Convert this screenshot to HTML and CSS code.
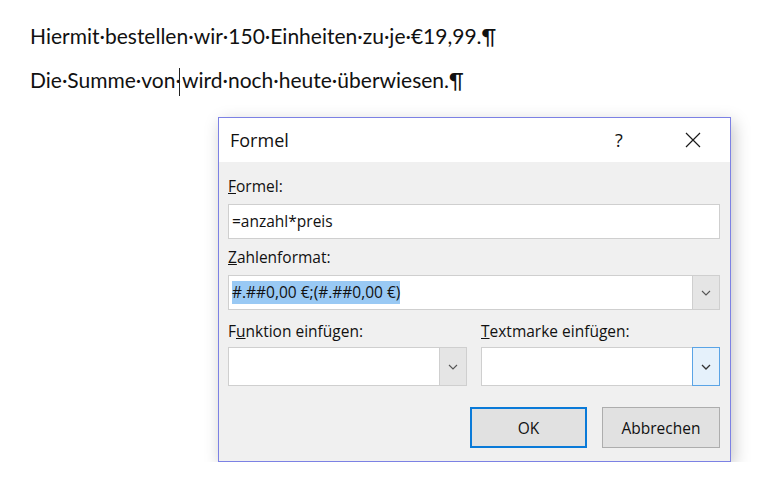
FILE: index.html
```html
<!DOCTYPE html>
<html lang="de">
<head>
    <meta charset="UTF-8">
    <meta name="viewport" content="width=device-width, initial-scale=1.0">
    <title>Formel</title>
    <link rel="stylesheet" href="styles.css">
</head>
<body>
    <div class="doc">
        <p>Hiermit·bestellen·wir·150·Einheiten·zu·je·€19,99.¶</p>
        <p>Die·Summe·von·<span class="caret"></span>wird·noch·heute·überwiesen.¶</p>
    </div>

    <div class="dialog">
        <div class="titlebar">
            <span class="title">Formel</span>
            <span class="help">?</span>
            <span class="close">
                <svg width="16" height="16" viewBox="0 0 16 16">
                    <path d="M1 1 L15 15 M15 1 L1 15" stroke="#1a1a1a" stroke-width="1.2" fill="none"/>
                </svg>
            </span>
        </div>
        <div class="content">
            <label class="lbl"><u>F</u>ormel:</label>
            <div class="field">=anzahl*preis</div>

            <label class="lbl"><u>Z</u>ahlenformat:</label>
            <div class="field combo">
                <span class="value"><span class="sel">#.##0,00 €;(#.##0,00 €)</span></span>
                <span class="drop">
                    <svg width="10" height="6" viewBox="0 0 10 6"><path d="M1 1 L5 5 L9 1" stroke="#555" stroke-width="1.1" fill="none"/></svg>
                </span>
            </div>

            <div class="cols">
                <div>
                    <label class="lbl short">F<u>u</u>nktion einfügen:</label>
                    <div class="field combo tall">
                        <span class="value"></span>
                        <span class="drop">
                            <svg width="10" height="6" viewBox="0 0 10 6"><path d="M1 1 L5 5 L9 1" stroke="#555" stroke-width="1.1" fill="none"/></svg>
                        </span>
                    </div>
                </div>
                <div>
                    <label class="lbl short"><u>T</u>extmarke einfügen:</label>
                    <div class="field combo tall">
                        <span class="value"></span>
                        <span class="drop hot">
                            <svg width="10" height="6" viewBox="0 0 10 6"><path d="M1 1 L5 5 L9 1" stroke="#333" stroke-width="1.3" fill="none"/></svg>
                        </span>
                    </div>
                </div>
            </div>

            <div class="buttons">
                <button class="btn default">OK</button>
                <button class="btn">Abbrechen</button>
            </div>
        </div>
    </div>
</body>
</html>
```

FILE: styles.css
```css
* {
    padding: 0;
    margin: 0;
    box-sizing: border-box;
}
body {
    background: #fff;
    color: #111;
}
.doc {
    padding: 14px 0 0 30px;
    font-family: Lato, "Open Sans", sans-serif;
    font-size: 21px;
}
.doc p {
    line-height: 44px;
    white-space: nowrap;
}
.caret {
    display: inline-block;
    width: 1px;
    height: 28px;
    background: #222;
    vertical-align: -8px;
    margin-left: -2px;
    margin-right: 2px;
}

.dialog {
    margin: 15px 0 0 218px;
    width: 513px;
    border: 1px solid #7c81e4;
    background: #f0f0f0;
    box-shadow: 3px 5px 16px rgba(0, 0, 0, 0.22);
    font-family: "Open Sans", "Noto Sans", sans-serif;
    color: #111;
}
.titlebar {
    height: 44px;
    background: #fff;
    display: flex;
    align-items: center;
    padding-left: 11px;
}
.title {
    font-size: 18px;
    flex: 1;
}
.help {
    font-size: 18px;
    width: 20px;
    margin-right: 50px;
}
.close {
    width: 45px;
    display: flex;
    align-items: center;
}
.close svg {
    display: block;
}

.content {
    padding: 13px 10px 13px 9px;
}
.lbl {
    display: block;
    height: 22px;
    line-height: 22px;
    font-size: 15.5px;
    margin: 7px 0;
}
.content > .lbl:first-child {
    margin-top: 0;
}
.lbl.short {
    margin: 10px 0 5px;
}
.field {
    height: 35px;
    background: #fff;
    border: 1px solid #cfcfcf;
    font-size: 15.5px;
    line-height: 33px;
    padding-left: 3px;
}
.combo {
    display: flex;
    padding-left: 3px;
}
.combo .value {
    flex: 1;
    display: flex;
    align-items: center;
}
.sel {
    background: #99c9f4;
    line-height: 23px;
}
.drop {
    width: 28px;
    background: #e5e5e5;
    border: 1px solid #cfcfcf;
    margin: -1px -1px -1px 0;
    display: flex;
    align-items: center;
    justify-content: center;
}
.drop.hot {
    background: #e5f1fb;
    border-color: #5aa4e6;
}
.tall {
    height: 39px;
}
.cols {
    display: grid;
    grid-template-columns: 1fr 1fr;
    column-gap: 14px;
}
.buttons {
    display: flex;
    justify-content: flex-end;
    gap: 15px;
    margin-top: 21px;
}
.btn {
    height: 41px;
    width: 118px;
    background: #e1e1e1;
    border: 1px solid #adadad;
    font-family: "Open Sans", "Noto Sans", sans-serif;
    font-size: 15.5px;
    color: #111;
}
.btn.default {
    width: 117px;
    border: 2px solid #0a7ad8;
}
```
